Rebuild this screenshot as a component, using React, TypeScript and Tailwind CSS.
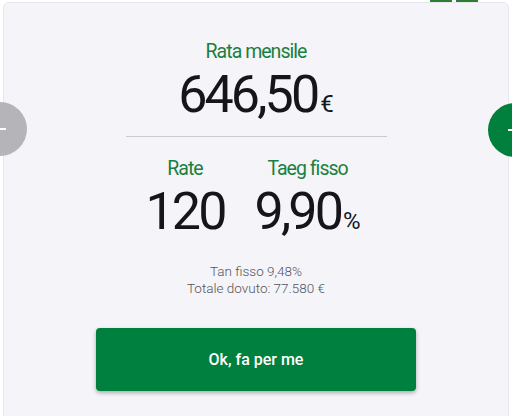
import React from 'react';

const Stat: React.FC<{ label: string; value: string; unit?: string; unitClass?: string }> = ({
  label,
  value,
  unit,
  unitClass,
}) => (
  <div className="flex flex-col items-center">
    <span className="mt-[1px] text-[19.5px] leading-[20px] tracking-[-0.05em] text-[#1b7f3e]">{label}</span>
    <div className="mt-[7px] flex items-baseline leading-none text-[#16161a]">
      <span className="text-[52px] leading-none tracking-[-0.055em]">{value}</span>
      {unit && <span className={unitClass}>{unit}</span>}
    </div>
  </div>
);

const App: React.FC = () => {
  return (
    <div className="relative w-[512px] h-[416px] overflow-hidden bg-white font-['Roboto',sans-serif]">
      {/* bits of the element above */}
      <div className="absolute left-[430px] top-0 h-[2px] w-[22px] bg-[#2f7d33]" />
      <div className="absolute left-[456px] top-0 h-[2px] w-[22px] bg-[#2f7d33]" />

      <div className="ml-[3px] mr-[3px] mt-[2px] h-[440px] rounded-md border border-[#e6e6ee] bg-[#f4f4f9] flex flex-col items-center pt-[38px]">
        <Stat label="Rata mensile" value="646,50" unit="€" unitClass="ml-[3px] text-[24px]" />

        <div className="mt-[15px] h-px w-[261px] bg-[#c9c9d1]" />

        <div className="mt-[21px] ml-[-6px] flex items-start gap-[30px]">
          <Stat label="Rate" value="120" />
          <Stat label="Taeg fisso" value="9,90" unit="%" unitClass="ml-[2px] text-[24px]" />
        </div>

        <div className="mt-[25px] flex flex-col items-center text-[13.5px] leading-[17px] font-light text-[#55555c]">
          <span>Tan fisso 9,48%</span>
          <span>Totale dovuto: 77.580 €</span>
        </div>

        <button className="mt-[31px] h-[63px] w-[320px] rounded-[4px] bg-[#00803e] text-[16px] font-medium text-white shadow-[0_2px_4px_rgba(0,0,0,0.3)]">
          Ok, fa per me
        </button>
      </div>

      {/* carousel arrows */}
      <div className="absolute left-[-27px] top-[102px] flex h-[54px] w-[54px] items-center justify-center rounded-full bg-[#b4b4b9]">
        <div className="ml-[-2px] h-[2px] w-[14px] bg-white" />
      </div>
      <div className="absolute left-[488px] top-[103px] flex h-[54px] w-[54px] items-center justify-center rounded-full bg-[#007f3d]">
        <div className="relative h-[14px] w-[14px]">
          <div className="absolute left-0 top-[6px] h-[2px] w-[14px] bg-white" />
          <div className="absolute left-[6px] top-0 h-[14px] w-[2px] bg-white" />
        </div>
      </div>
    </div>
  );
};

export default App;
